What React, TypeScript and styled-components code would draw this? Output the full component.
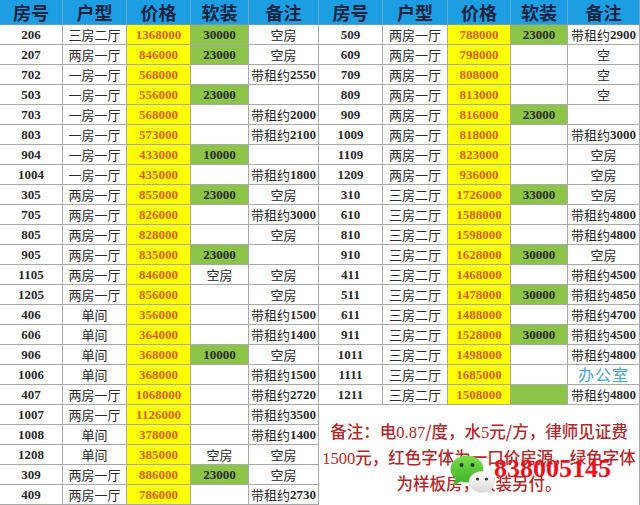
import React from "react";
import styled, { createGlobalStyle } from "styled-components";

const Global = createGlobalStyle`
  html, body { margin: 0; padding: 0; background: #fff; }
  body { width: 640px; height: 505px; overflow: hidden; }
  * { box-sizing: border-box; }
`;

type Tone = "plain" | "price" | "green";
type Row = [string, string, string, string, string];

const leftRows: Row[] = [
  ["206", "三房二厅", "1368000", "30000", "空房"],
  ["207", "两房一厅", "846000", "23000", "空房"],
  ["702", "一房一厅", "568000", "", "带租约2550"],
  ["503", "一房一厅", "556000", "23000", ""],
  ["703", "一房一厅", "568000", "", "带租约2000"],
  ["803", "一房一厅", "573000", "", "带租约2100"],
  ["904", "一房一厅", "433000", "10000", ""],
  ["1004", "一房一厅", "435000", "", "带租约1800"],
  ["305", "两房一厅", "855000", "23000", "空房"],
  ["705", "两房一厅", "826000", "", "带租约3000"],
  ["805", "两房一厅", "828000", "", "空房"],
  ["905", "两房一厅", "835000", "23000", ""],
  ["1105", "两房一厅", "846000", "空房", "空房"],
  ["1205", "两房一厅", "856000", "", "空房"],
  ["406", "单间", "356000", "", "带租约1500"],
  ["606", "单间", "364000", "", "带租约1400"],
  ["906", "单间", "368000", "10000", "空房"],
  ["1006", "单间", "368000", "", "带租约1500"],
  ["407", "两房一厅", "1068000", "", "带租约2720"],
  ["1007", "两房一厅", "1126000", "", "带租约3500"],
  ["1008", "单间", "378000", "", "带租约1400"],
  ["1208", "单间", "385000", "空房", "空房"],
  ["309", "两房一厅", "886000", "23000", "空房"],
  ["409", "两房一厅", "786000", "", "带租约2730"],
];

const rightRows: Row[] = [
  ["509", "两房一厅", "788000", "23000", "带租约2900"],
  ["609", "两房一厅", "798000", "", "空"],
  ["709", "两房一厅", "808000", "", "空"],
  ["809", "两房一厅", "813000", "", "空"],
  ["909", "两房一厅", "816000", "23000", ""],
  ["1009", "两房一厅", "818000", "", "带租约3000"],
  ["1109", "两房一厅", "823000", "", "空房"],
  ["1209", "两房一厅", "936000", "", "空房"],
  ["310", "三房二厅", "1726000", "33000", "空房"],
  ["610", "三房二厅", "1588000", "", "带租约4800"],
  ["810", "三房二厅", "1598000", "", "带租约4800"],
  ["910", "三房二厅", "1628000", "30000", "空房"],
  ["411", "三房二厅", "1468000", "", "带租约4500"],
  ["511", "三房二厅", "1478000", "30000", "带租约4850"],
  ["611", "三房二厅", "1488000", "", "带租约4700"],
  ["911", "三房二厅", "1528000", "30000", "带租约4500"],
  ["1011", "三房二厅", "1498000", "", "带租约4800"],
  ["1111", "三房二厅", "1685000", "", "办公室"],
  ["1211", "三房二厅", "1508000", "G", "带租约4800"],
];

const headers = ["房号", "户型", "价格", "软装", "备注"];

const Page = styled.div`
  display: flex;
  width: 640px;
  height: 505px;
  overflow: hidden;
`;

const Half = styled.div<{ $w: number }>`
  display: flex;
  flex-direction: column;
  width: ${(p) => p.$w}px;
  flex: none;
`;

const Grid = styled.div<{ $cols: string }>`
  display: grid;
  grid-template-columns: ${(p) => p.$cols};
  grid-template-rows: 25px;
  grid-auto-rows: 20px;
`;

const HeadCell = styled.div`
  display: flex;
  align-items: center;
  justify-content: center;
  background: #1d9de2;
  border-right: 1px solid #6aa9cf;
  border-bottom: 1px solid #5d9cc4;
  font-family: "Noto Sans CJK SC", sans-serif;
  font-weight: 700;
  font-size: 18px;
  line-height: 24px;
  color: #17233f;
`;

const toneBg: Record<Tone, string> = {
  plain: "#ffffff",
  price: "#ffff08",
  green: "#8cc447",
};

const Cell = styled.div<{ $tone: Tone }>`
  display: flex;
  align-items: center;
  justify-content: center;
  background: ${(p) => toneBg[p.$tone]};
  border-right: 1px solid #a9a9a9;
  border-bottom: 1px solid #a9a9a9;
  font-size: 13px;
  line-height: 19px;
  color: ${(p) => (p.$tone === "price" ? "#d8600c" : "#2a2a2a")};
  white-space: nowrap;
`;

const Num = styled.span`
  font-family: "Liberation Serif", serif;
  font-weight: 700;
`;

const Cjk = styled.span`
  font-family: "Noto Sans CJK SC", sans-serif;
  font-weight: 400;
`;

const Office = styled.span`
  font-family: "Noto Sans CJK SC", sans-serif;
  font-size: 16px;
  line-height: 19px;
  color: #44a6c6;
  letter-spacing: 1px;
`;

const NoteBox = styled.div`
  position: relative;
  flex: 1;
  border-right: 1px solid #a9a9a9;
  padding-top: 14px;
  display: flex;
  flex-direction: column;
  align-items: center;
  color: #b3282a;
  font-size: 16.5px;
  line-height: 25px;
  white-space: nowrap;
`;

const NoteLine = styled.div`
  text-align: center;
`;

const NoteNum = styled.span`
  font-family: "Liberation Serif", serif;
`;

const NoteCjk = styled.span`
  font-family: "Noto Sans CJK SC", sans-serif;
  font-weight: 500;
`;

const Phone = styled.div`
  position: absolute;
  left: 175px;
  top: 51px;
  font-family: "Liberation Serif", serif;
  font-weight: 700;
  font-size: 26px;
  line-height: 26px;
  color: #e6121c;
`;

const Logo = styled.svg`
  position: absolute;
  left: 129px;
  top: 44px;
`;

function Mixed({ text, numEl = Num, cjkEl = Cjk }: { text: string; numEl?: any; cjkEl?: any }) {
  const N = numEl;
  const C = cjkEl;
  const parts = text.split(/([\d.]+)/).filter((s) => s !== "");
  return (
    <>
      {parts.map((p, i) => (/^[\d.]+$/.test(p) ? <N key={i}>{p}</N> : <C key={i}>{p}</C>))}
    </>
  );
}

function Table({ rows, cols }: { rows: Row[]; cols: string }) {
  return (
    <Grid $cols={cols}>
      {headers.map((h) => (
        <HeadCell key={h}>{h}</HeadCell>
      ))}
      {rows.map((r) => {
        const [no, type, price, soft, note] = r;
        const softTone: Tone = soft === "" || soft === "空房" ? "plain" : "green";
        return (
          <React.Fragment key={no}>
            <Cell $tone="plain">
              <Mixed text={no} />
            </Cell>
            <Cell $tone="plain">
              <Mixed text={type} />
            </Cell>
            <Cell $tone="price">
              <Mixed text={price} />
            </Cell>
            <Cell $tone={softTone}>{soft === "G" ? null : <Mixed text={soft} />}</Cell>
            <Cell $tone="plain">
              {note === "办公室" ? <Office>办公室</Office> : <Mixed text={note} />}
            </Cell>
          </React.Fragment>
        );
      })}
    </Grid>
  );
}

function WeChatLogo() {
  return (
    <Logo width="50" height="48" viewBox="0 0 50 48">
      <defs>
        <linearGradient id="gg" x1="0" y1="0" x2="0" y2="1">
          <stop offset="0" stopColor="#7ddb4f" />
          <stop offset="1" stopColor="#3fb52a" />
        </linearGradient>
        <linearGradient id="wg" x1="0" y1="0" x2="0" y2="1">
          <stop offset="0" stopColor="#ffffff" />
          <stop offset="1" stopColor="#d9d9d9" />
        </linearGradient>
      </defs>
      <ellipse cx="19" cy="20" rx="16.5" ry="13.5" fill="url(#gg)" />
      <path d="M8 29 L5 37 L15 31 Z" fill="#45b82e" />
      <circle cx="13.5" cy="16" r="2" fill="#1d3a16" />
      <circle cx="24.5" cy="16" r="2" fill="#1d3a16" />
      <ellipse cx="34" cy="33" rx="13" ry="10.5" fill="url(#wg)" stroke="#e6e6e6" strokeWidth="0.6" />
      <path d="M42 40 L45 46 L37 42 Z" fill="#dedede" />
      <circle cx="29.5" cy="30" r="1.6" fill="#3a3a3a" />
      <circle cx="38.5" cy="30" r="1.6" fill="#3a3a3a" />
    </Logo>
  );
}

export default function App() {
  return (
    <>
      <Global />
      <Page>
        <Half $w={319}>
          <Table rows={leftRows} cols="63px 64px 64px 58px 70px" />
        </Half>
        <Half $w={321}>
          <Table rows={rightRows} cols="64px 65px 63px 57px 72px" />
          <NoteBox>
            <NoteLine>
              <Mixed text="备注：电0.87/度，水5元/方，律师见证费" numEl={NoteNum} cjkEl={NoteCjk} />
            </NoteLine>
            <NoteLine>
              <Mixed text="1500元，红色字体为一口价房源，绿色字体" numEl={NoteNum} cjkEl={NoteCjk} />
            </NoteLine>
            <NoteLine>
              <Mixed text="为样板房，软装另付。" numEl={NoteNum} cjkEl={NoteCjk} />
            </NoteLine>
            <WeChatLogo />
            <Phone>838005145</Phone>
          </NoteBox>
        </Half>
      </Page>
    </>
  );
}
